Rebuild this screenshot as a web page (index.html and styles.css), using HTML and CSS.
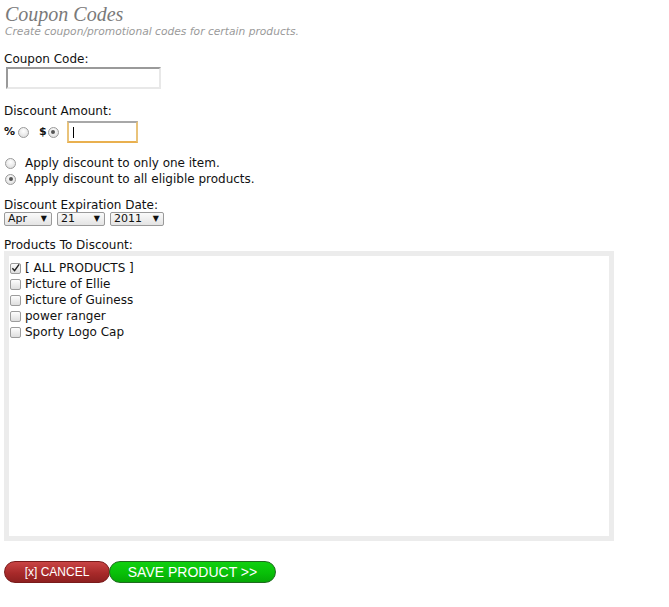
FILE: index.html
```html
<!DOCTYPE html>
<html>
<head>
<meta charset="utf-8">
<link rel="stylesheet" href="styles.css">
</head>
<body>
<div class="page">
  <h1 class="title">Coupon Codes</h1>
  <p class="subtitle">Create coupon/promotional codes for certain products.</p>

  <div class="field f-code">
    <label class="label">Coupon Code:</label>
    <input class="text code" type="text">
  </div>

  <div class="field f-amount">
    <label class="label">Discount Amount:</label>
    <div class="amount-row">
      <span class="sym">%</span><span class="radio pct"></span>
      <span class="sym dollar">$</span><span class="radio on"></span>
      <span class="text amount focus"><span class="caret"></span></span>
    </div>
  </div>

  <div class="apply">
    <div class="opt"><span class="radio"></span><span>Apply discount to only one item.</span></div>
    <div class="opt"><span class="radio on"></span><span>Apply discount to all eligible products.</span></div>
  </div>

  <div class="field f-date">
    <label class="label tight">Discount Expiration Date:</label>
    <div class="selects">
      <span class="select s-month">Apr<span class="arrow">&#9660;</span></span>
      <span class="select s-day">21<span class="arrow">&#9660;</span></span>
      <span class="select s-year">2011<span class="arrow">&#9660;</span></span>
    </div>
  </div>

  <div class="field f-products">
    <label class="label">Products To Discount:</label>
    <div class="products">
      <div class="prod"><span class="check on"><svg viewBox="0 0 10 10" width="10" height="10"><path d="M1.5 5.2 L4 8 L9 1" fill="none" stroke="#222" stroke-width="1.6"/></svg></span>[ ALL PRODUCTS ]</div>
      <div class="prod"><span class="check"></span>Picture of Ellie</div>
      <div class="prod"><span class="check"></span>Picture of Guiness</div>
      <div class="prod"><span class="check"></span>power ranger</div>
      <div class="prod"><span class="check"></span>Sporty Logo Cap</div>
    </div>
  </div>

  <div class="buttons">
    <span class="btn cancel">[x] CANCEL</span>
    <span class="btn save">SAVE PRODUCT &gt;&gt;</span>
  </div>
</div>
</body>
</html>
```

FILE: styles.css
```css
html, body { margin: 0; padding: 0; background: #fff; }
body { font-family: "DejaVu Sans", Verdana, sans-serif; font-size: 12px; color: #111; }
.page { padding: 3px 4px 0 4px; }

.title {
  margin: 0 0 0 1px;
  font-family: "Liberation Serif", "Times New Roman", serif;
  font-style: italic;
  font-weight: normal;
  font-size: 20px;
  line-height: 22px;
  color: #7a7a7a;
}
.subtitle {
  margin: 0 0 0 1px;
  font-family: "DejaVu Sans", Verdana, sans-serif;
  font-style: italic;
  font-size: 10.7px;
  line-height: 14px;
  color: #9a9a9a;
}

.label { display: block; line-height: 15px; }

.f-code { margin-top: 13px; }
.f-amount { margin-top: 15px; }
.f-date { margin-top: 11px; }
.f-products { margin-top: 13px; }
.f-products .label { line-height: 12px; }

.text {
  display: block;
  box-sizing: border-box;
  border: 2px solid;
  border-color: #9a9a9a #e8e8e8 #e8e8e8 #9a9a9a;
  background: #fff;
  height: 22px;
  padding: 0;
  outline: none;
}
.code { width: 155px; margin: 0 0 0 2px; }

.amount-row { display: flex; align-items: center; margin-top: 2px; height: 22px; }
.sym { font-weight: bold; font-size: 11px; line-height: 12px; }
.pct { margin-left: 3px; }
.dollar { margin-left: 10px; margin-right: 1px; }
.amount { width: 71px; margin-left: 8px; position: relative; }
.focus { border-color: #a8a8a8 #e9c37a #e9b04f #e9c37a; }
.caret { position: absolute; left: 4px; top: 4px; width: 1px; height: 11px; background: #000; }

.radio {
  display: inline-block;
  box-sizing: border-box;
  width: 11px; height: 11px;
  border-radius: 50%;
  border: 1px solid #9a9a9a;
  background: radial-gradient(circle at 50% 35%, #fff 0%, #e4e4e4 70%, #d4d4d4 100%);
  position: relative;
  flex: none;
}
.radio.on::after {
  content: "";
  position: absolute;
  left: 2.5px; top: 2.5px;
  width: 4px; height: 4px;
  border-radius: 50%;
  background: #555;
}

.apply { margin-top: 12px; }
.opt { display: flex; align-items: center; height: 16px; font-size: 12px; }
.opt .radio { margin: 0 9px 0 1px; }

.tight { line-height: 14px; }

.selects { display: flex; gap: 5px; }
.select {
  display: flex;
  align-items: center;
  justify-content: space-between;
  box-sizing: border-box;
  height: 14px;
  padding: 0 4px 0 3px;
  border: 1px solid #9a9a9a;
  border-radius: 2px;
  background: linear-gradient(#fafafa, #e4e4e4);
  font-size: 11px;
  line-height: 12px;
}
.s-month { width: 48px; }
.s-day { width: 48px; }
.s-year { width: 54px; }
.arrow { font-size: 8px; line-height: 8px; }

.products {
  box-sizing: border-box;
  width: 610px;
  height: 290px;
  margin-top: 0;
  border: 5px solid #ececec;
  padding: 4px 0 0 0;
  background: #fff;
}
.prod { display: flex; align-items: center; height: 16px; line-height: 16px; }
.check {
  display: inline-flex;
  align-items: center;
  justify-content: center;
  box-sizing: border-box;
  width: 11px; height: 11px;
  border: 1px solid #9c9c9c;
  border-radius: 2px;
  background: linear-gradient(#fdfdfd, #dedede);
  margin: 0 4px 0 1px;
  flex: none;
}
.check svg { display: block; }

.buttons { display: flex; margin-top: 20px; }
.btn {
  display: flex;
  align-items: center;
  justify-content: center;
  box-sizing: border-box;
  height: 22px;
  border-radius: 11px;
  font-family: "Liberation Sans", Arial, sans-serif;
  color: #fff;
}
.cancel {
  width: 106px;
  font-size: 12px;
  background: linear-gradient(#c94545, #a82a2a 55%, #8e2020);
  border: 1px solid #7a1b1b;
}
.save {
  width: 167px;
  font-size: 14px;
  background: linear-gradient(#10d010, #08c008 55%, #06a806);
  border: 1px solid #1f6b1f;
  margin-left: -1px;
}
```
